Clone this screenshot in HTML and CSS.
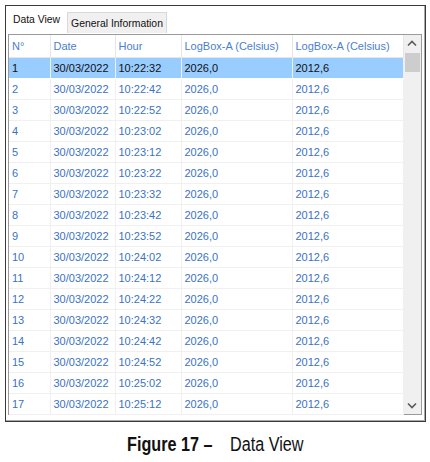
FILE: index.html
```html
<!DOCTYPE html>
<html>
<head>
<meta charset="utf-8">
<link rel="stylesheet" href="styles.css">
</head>
<body>
<div class="frame">
  <div class="tabs">
    <div class="tab active">Data View</div>
    <div class="tab">General Information</div>
  </div>
  <div class="grid">
    <table class="data">
      <colgroup>
        <col class="c1"><col class="c2"><col class="c3"><col class="c4"><col class="c5">
      </colgroup>
      <thead>
        <tr><th>N°</th><th>Date</th><th>Hour</th><th>LogBox-A (Celsius)</th><th>LogBox-A (Celsius)</th></tr>
      </thead>
      <tbody>
        <tr class="sel"><td>1</td><td>30/03/2022</td><td>10:22:32</td><td>2026,0</td><td>2012,6</td></tr>
        <tr><td>2</td><td>30/03/2022</td><td>10:22:42</td><td>2026,0</td><td>2012,6</td></tr>
        <tr><td>3</td><td>30/03/2022</td><td>10:22:52</td><td>2026,0</td><td>2012,6</td></tr>
        <tr><td>4</td><td>30/03/2022</td><td>10:23:02</td><td>2026,0</td><td>2012,6</td></tr>
        <tr><td>5</td><td>30/03/2022</td><td>10:23:12</td><td>2026,0</td><td>2012,6</td></tr>
        <tr><td>6</td><td>30/03/2022</td><td>10:23:22</td><td>2026,0</td><td>2012,6</td></tr>
        <tr><td>7</td><td>30/03/2022</td><td>10:23:32</td><td>2026,0</td><td>2012,6</td></tr>
        <tr><td>8</td><td>30/03/2022</td><td>10:23:42</td><td>2026,0</td><td>2012,6</td></tr>
        <tr><td>9</td><td>30/03/2022</td><td>10:23:52</td><td>2026,0</td><td>2012,6</td></tr>
        <tr><td>10</td><td>30/03/2022</td><td>10:24:02</td><td>2026,0</td><td>2012,6</td></tr>
        <tr><td>11</td><td>30/03/2022</td><td>10:24:12</td><td>2026,0</td><td>2012,6</td></tr>
        <tr><td>12</td><td>30/03/2022</td><td>10:24:22</td><td>2026,0</td><td>2012,6</td></tr>
        <tr><td>13</td><td>30/03/2022</td><td>10:24:32</td><td>2026,0</td><td>2012,6</td></tr>
        <tr><td>14</td><td>30/03/2022</td><td>10:24:42</td><td>2026,0</td><td>2012,6</td></tr>
        <tr><td>15</td><td>30/03/2022</td><td>10:24:52</td><td>2026,0</td><td>2012,6</td></tr>
        <tr><td>16</td><td>30/03/2022</td><td>10:25:02</td><td>2026,0</td><td>2012,6</td></tr>
        <tr><td>17</td><td>30/03/2022</td><td>10:25:12</td><td>2026,0</td><td>2012,6</td></tr>
      </tbody>
    </table>
    <div class="scroll">
      <div class="arrow">
        <svg width="10" height="7" viewBox="0 0 10 7"><path d="M1 5.5 L5 1.5 L9 5.5" fill="none" stroke="#5a5a5a" stroke-width="1.6"/></svg>
      </div>
      <div class="thumb"></div>
      <div class="track"></div>
      <div class="arrow">
        <svg width="10" height="7" viewBox="0 0 10 7"><path d="M1 1.5 L5 5.5 L9 1.5" fill="none" stroke="#5a5a5a" stroke-width="1.6"/></svg>
      </div>
    </div>
  </div>
</div>
<div class="caption"><span class="cap-inner"><b>Figure 17 –</b><span class="cap-gap"></span>Data View</span></div>
</body>
</html>
```
FILE: styles.css
```css
html, body {
  margin: 0;
  padding: 0;
  background: #ffffff;
}
body {
  font-family: "Liberation Sans", Arial, sans-serif;
  width: 430px;
  height: 462px;
  overflow: hidden;
}
.frame {
  margin: 5px 0 0 5px;
  width: 421px;
  height: 417px;
  box-sizing: border-box;
  border: 1px solid #3a3a3a;
  box-shadow: inset -1px -1px 0 #a8a8a8;
  background: #ffffff;
  display: flex;
  flex-direction: column;
}
.tabs {
  height: 28px;
  display: flex;
  align-items: flex-end;
}
.tab {
  font-size: 10.4px;
  color: #111;
  box-sizing: border-box;
  display: flex;
  align-items: center;
  justify-content: center;
}
.tab.active {
  width: 61px;
  height: 28px;
  background: #ffffff;
  padding-bottom: 1px;
}
.tab:not(.active) {
  width: 100px;
  height: 21px;
  margin-bottom: 1px;
  background: #f0f0f0;
  border: 1px solid #d9d9d9;
  border-bottom: none;
  padding-top: 1px;
}
.grid {
  margin-left: 2px;
  width: 414px;
  height: 381px;
  box-sizing: border-box;
  border: 1px solid #9a9a9a;
  display: flex;
}
.data {
  border-collapse: collapse;
  table-layout: fixed;
  width: 394px;
  font-size: 11px;
}
.c1 { width: 41px; }
.c2 { width: 65px; }
.c3 { width: 66px; }
.c4 { width: 111px; }
.c5 { width: 111px; }
.data th {
  height: 22px;
  padding: 0 0 0 3px;
  text-align: left;
  font-weight: normal;
  color: #4a80d0;
  border-right: 1px solid #e6e6e6;
  border-bottom: 1px solid #e6e6e6;
  white-space: nowrap;
  box-sizing: border-box;
}
.data th:first-child { padding-left: 3px; }
.data td {
  height: 21px;
  padding: 0 0 0 3px;
  color: #3a72c6;
  border-right: 1px solid #f0f0f0;
  border-bottom: 1px solid #f0f0f0;
  white-space: nowrap;
  box-sizing: border-box;
}
.data tr.sel td {
  background: #99ccff;
  color: #111111;
  border-bottom-color: #ffffff;
}
.scroll {
  width: 18px;
  background: #f0f0f0;
  display: flex;
  flex-direction: column;
}
.arrow {
  height: 17px;
  display: flex;
  align-items: center;
  justify-content: center;
}
.thumb {
  height: 19px;
  margin: 1px 1px 0 1px;
  background: #cdcdcd;
}
.track {
  flex: 1;
}
.caption {
  margin-top: 11px;
  text-align: center;
  font-family: "Liberation Sans", Arial, sans-serif;
  font-size: 19.5px;
  line-height: 22px;
  color: #111;
}
.cap-inner {
  display: inline-block;
  transform: scaleX(0.83);
  white-space: nowrap;
}
.cap-gap {
  display: inline-block;
  width: 21px;
}
```
